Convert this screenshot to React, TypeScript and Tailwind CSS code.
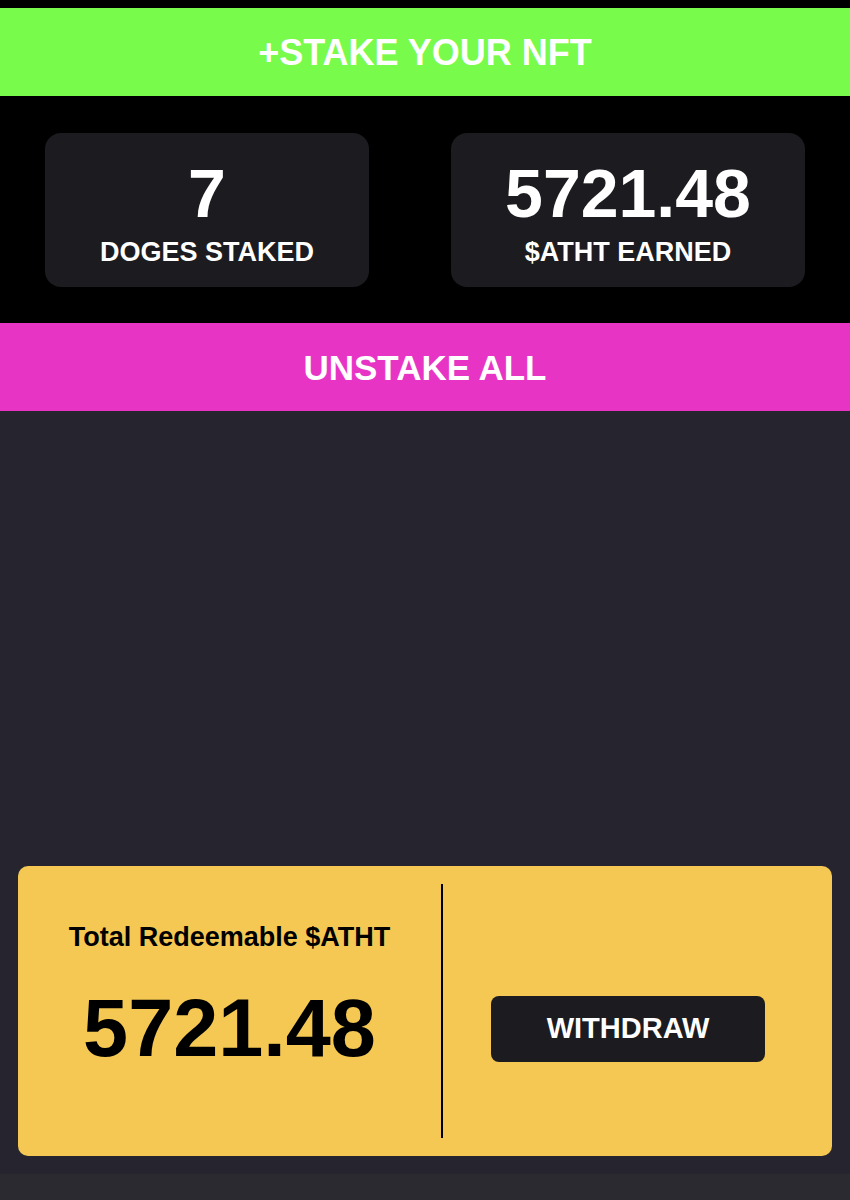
import React from 'react';

const StatCard: React.FC<{ value: string; label: string; width: string }> = ({ value, label, width }) => (
  <div className={`${width} flex flex-col items-center rounded-2xl bg-[#1c1b1f] pt-[26px] pb-[21px] text-white`}>
    <div className="text-[68px] font-bold leading-none">{value}</div>
    <div className="mt-[12px] text-[27px] font-bold leading-none">{label}</div>
  </div>
);

const App: React.FC = () => {
  return (
    <div className="flex h-[1200px] w-full flex-col bg-black font-['Liberation_Sans',Arial,sans-serif]">
      <div className="h-2 bg-black" />

      <button className="flex h-[88px] w-full items-center justify-center bg-[#78fb4b] pt-[2px] text-[36px] font-bold text-white">
        +STAKE YOUR NFT
      </button>

      <div className="flex justify-between bg-black px-[45px] pt-[37px] pb-[36px]">
        <StatCard value="7" label="DOGES STAKED" width="w-[324px]" />
        <StatCard value="5721.48" label="$ATHT EARNED" width="w-[354px]" />
      </div>

      <button className="flex h-[88px] w-full items-center justify-center bg-[#e834c5] pt-[2px] text-[35px] font-bold text-white">
        UNSTAKE ALL
      </button>

      <main className="flex flex-1 flex-col justify-end bg-[#25242f] px-[18px] pb-[18px]">
        <div className="flex h-[290px] rounded-[10px] bg-[#f4c853] text-black">
          <div className="flex w-[423px] flex-col items-center pt-[58px]">
            <div className="text-[27px] font-bold leading-none">Total Redeemable $ATHT</div>
            <div className="mt-[37px] text-[81px] font-bold leading-none">5721.48</div>
          </div>
          <div className="my-[18px] w-[2px] bg-black" />
          <div className="flex-1 pl-[48px] pt-[130px]">
            <button className="flex h-[66px] w-[274px] items-center justify-center rounded-lg bg-[#1c1b1f] text-[29px] font-bold text-white">
              WITHDRAW
            </button>
          </div>
        </div>
      </main>

      <div className="h-[26px] bg-[#2b2a30]" />
    </div>
  );
};

export default App;
